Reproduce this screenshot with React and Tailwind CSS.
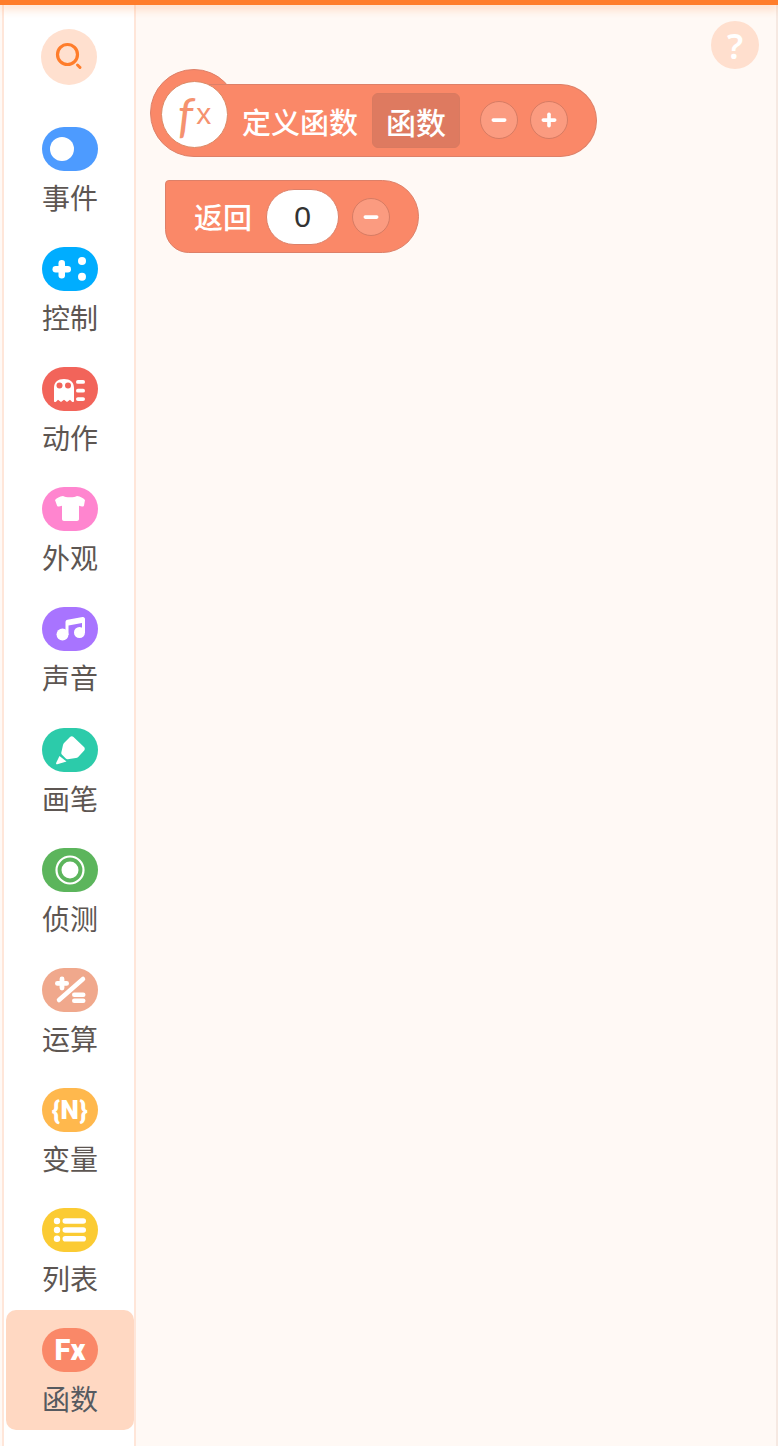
import clsx from 'clsx'

const cjk = "font-['Noto_Sans_CJK_SC','Noto_Sans',sans-serif]"

function SwitchIcon() {
  return (
    <svg width="56" height="44" viewBox="0 0 56 44">
      <circle cx="20" cy="22" r="12" fill="#fff" />
    </svg>
  )
}

function GameIcon() {
  return (
    <svg width="56" height="44" viewBox="0 0 56 44" fill="#fff">
      <rect x="10.500" y="19" width="18.500" height="6.500" rx="3.200" />
      <rect x="16.500" y="13" width="6.500" height="18.500" rx="3.200" />
      <circle cx="40" cy="14" r="4" />
      <circle cx="40" cy="29.700" r="4" />
    </svg>
  )
}

function GhostIcon() {
  return (
    <svg width="56" height="44" viewBox="0 0 56 44">
      <path
        d="M12 34V21c0-6 4-9 10-9s10 3 10 9v13c0 1.200-1.200 1.400-2 .7l-2-2-3 2.400-3-2.400-3 2.400-3-2.400-2 2c-.8.7-2 .5-2-.7z"
        fill="#fff"
      />
      <circle cx="17.500" cy="18.500" r="3" fill="#f2645a" />
      <circle cx="26" cy="18.500" r="3" fill="#f2645a" />
      <rect x="34" y="13" width="9" height="3.800" rx="1.900" fill="#fff" />
      <rect x="34" y="21.800" width="9" height="3.800" rx="1.900" fill="#fff" />
      <rect x="34" y="30.200" width="9" height="3.800" rx="1.900" fill="#fff" />
    </svg>
  )
}

function ShirtIcon() {
  return (
    <svg width="56" height="44" viewBox="0 0 56 44">
      <path
        d="M21 9c2 1.800 12 1.800 14 0 3.500.5 6 2 8 4l-1 5.500c-.3 1-1 1.200-2 1l-3-.8V32c0 1-.8 2-2 2H22c-1.200 0-2-1-2-2V18.700l-3 .8c-1 .2-1.700 0-2-1l-2-5.500c2-2 4.500-3.500 8-4z"
        fill="#fff"
      />
    </svg>
  )
}

function MusicIcon() {
  return (
    <svg width="56" height="44" viewBox="0 0 56 44" fill="#fff">
      <circle cx="20.500" cy="27.500" r="6" />
      <circle cx="37.500" cy="25.500" r="5.500" />
      <path d="M23.500 28V15c0-1.200.8-2 2-2.200L40.500 10c1.500-.3 2.500.8 2.500 2v14h-3V16l-13.500 2.500V28z" />
    </svg>
  )
}

function PenIcon() {
  return (
    <svg width="56" height="44" viewBox="0 0 56 44" fill="#fff">
      <path d="M28 9c1-1 2.500-1 3.500 0L42 19c1 1 1 2.500.2 3.500l-6 6.500c-.6.700-1.400 1-2.400 1.100l-8 1.200c-.8.100-1.500-.2-2-.7l-4-4c-.5-.5-.7-1.200-.5-2l1.700-7.500c.2-.8.5-1.400 1-2z" />
      <path d="M17.500 28l7 5.500-9.200 2.800c-.8.200-1.400-.4-1.200-1.200z" />
    </svg>
  )
}

function RadarIcon() {
  return (
    <svg width="56" height="44" viewBox="0 0 56 44" fill="none">
      <circle cx="28" cy="22" r="13.500" stroke="#fff" strokeWidth="2.200" />
      <circle cx="28" cy="22" r="8.500" fill="#fff" />
    </svg>
  )
}

function MathIcon() {
  return (
    <svg width="56" height="44" viewBox="0 0 56 44" fill="#fff">
      <rect x="13" y="13" width="14" height="4.800" rx="2.400" />
      <rect x="17.600" y="8.500" width="4.800" height="14" rx="2.400" />
      <path d="M17 32L41 11" stroke="#fff" strokeWidth="4.500" strokeLinecap="round" />
      <rect x="30" y="24.500" width="13.500" height="4.500" rx="2.200" />
      <rect x="30" y="30.500" width="13.500" height="4.500" rx="2.200" />
    </svg>
  )
}

function ListIcon() {
  return (
    <svg width="56" height="44" viewBox="0 0 56 44" fill="#fff">
      <circle cx="15" cy="13" r="3.200" />
      <circle cx="15" cy="22" r="3.200" />
      <circle cx="15" cy="30.700" r="3.200" />
      <rect x="20.500" y="10.200" width="23.500" height="5.600" rx="2.800" />
      <rect x="20.500" y="19.200" width="23.500" height="5.600" rx="2.800" />
      <rect x="20.500" y="27.900" width="23.500" height="5.600" rx="2.800" />
    </svg>
  )
}

function TextIcon({ children, className }) {
  return <span className={clsx("font-['Roboto',sans-serif] leading-none text-white", className)}>{children}</span>
}

const categories = [
  { label: '事件', color: 'bg-[#4d9bff]', icon: <SwitchIcon /> },
  { label: '控制', color: 'bg-[#00adff]', icon: <GameIcon /> },
  { label: '动作', color: 'bg-[#f2645a]', icon: <GhostIcon /> },
  { label: '外观', color: 'bg-[#ff85cf]', icon: <ShirtIcon /> },
  { label: '声音', color: 'bg-[#a874ff]', icon: <MusicIcon /> },
  { label: '画笔', color: 'bg-[#2ccbaa]', icon: <PenIcon /> },
  { label: '侦测', color: 'bg-[#5cb55c]', icon: <RadarIcon /> },
  { label: '运算', color: 'bg-[#f0a88c]', icon: <MathIcon /> },
  {
    label: '变量',
    color: 'bg-[#ffb84d]',
    icon: <TextIcon className="text-[26px] font-black tracking-[0.5px]">{'{N}'}</TextIcon>,
  },
  { label: '列表', color: 'bg-[#fbcb33]', icon: <ListIcon /> },
  {
    label: '函数',
    color: 'bg-[#fa8868]',
    icon: <TextIcon className="text-[29px] font-black">Fx</TextIcon>,
    active: true,
  },
]

function Category({ label, color, icon, active }) {
  return (
    <div
      className={clsx(
        'flex h-[120.11px] flex-col items-center rounded-[10px] pt-[18px]',
        active && 'bg-[#ffd8c2]'
      )}
    >
      <div className={clsx('flex h-11 w-14 items-center justify-center rounded-[22px]', color)}>{icon}</div>
      <div className={clsx('mt-[4px] text-[28px] leading-[44px]', active ? 'text-[#565a60]' : 'text-[#5d5652]')}>
        {label}
      </div>
    </div>
  )
}

function RoundButton({ plus }) {
  return (
    <div className="flex size-[38px] items-center justify-center rounded-full border border-[#d67c64] bg-[#fb9b80]">
      <svg width="18" height="18" viewBox="0 0 18 18" fill="#fff">
        <rect x="1.500" y="7.300" width="15" height="3.600" rx="1.800" />
        {plus && <rect x="7.200" y="1.500" width="3.600" height="15" rx="1.800" />}
      </svg>
    </div>
  )
}

export default function App() {
  return (
    <div className={clsx('relative flex h-[1446px] w-[778px] overflow-hidden bg-[#fff9f5]', cjk)}>
      <div className="absolute inset-x-0 top-0 z-10 h-[5px] bg-[#ff7d2b] shadow-[0_3px_10px_rgba(255,125,43,0.4)]" />

      <aside className="ml-[2px] h-full w-[134px] border-x-2 border-[#ffe6d9] bg-white pt-[10px] pl-[2px]">
        <div className="flex h-[99px] items-start justify-center pt-[19px] pr-[2px]">
          <div className="flex size-14 items-center justify-center rounded-full bg-[#ffe0cf]">
            <svg width="30" height="30" viewBox="0 0 30 30" fill="none" stroke="#ff7d2b">
              <circle cx="13.500" cy="12.500" r="10" strokeWidth="3.200" />
              <path d="M23.500 23l2.500 2.500" strokeWidth="3" strokeLinecap="round" />
            </svg>
          </div>
        </div>
        {categories.map((c) => (
          <Category key={c.label} {...c} />
        ))}
      </aside>

      <main className="relative flex-1 border-r-2 border-[#f6e9e2] pt-[84px] pl-[14px]">
        <div className="absolute top-[21px] right-[17px] flex size-12 items-center justify-center rounded-full bg-[#ffdfce] font-['Noto_Sans',sans-serif] text-[35px] leading-none font-semibold text-white">
          ?
        </div>

        <div className="relative h-[73px] w-[447px]">
          <div className="absolute -top-[15px] left-0 size-[88px] rounded-full border border-[#dd8068] bg-[#fa8868]" />
          <div className="absolute inset-y-0 right-0 left-[44px] flex items-center rounded-r-[37px] border border-l-0 border-[#dd8068] bg-[#fa8868] pl-[48px]">
            <span className="mt-[2px] text-[29px] leading-none font-medium text-white">定义函数</span>
            <div className="ml-[14px] flex h-[55px] w-[88px] items-center justify-center rounded-md border border-[#d97a60] bg-[#de7a60]">
              <span className="text-[30px] leading-none font-medium text-white">函数</span>
            </div>
            <div className="mt-[-1px] ml-5 flex gap-3">
              <RoundButton />
              <RoundButton plus />
            </div>
          </div>
          <div className="absolute -top-[3px] left-[11px] flex size-[67px] items-center justify-center rounded-full border border-[#dc8a66] bg-white text-[#f5926f]">
            <span className="font-['Lato',sans-serif] text-[48px] leading-none italic">f</span>
            <span className="-mt-[1px] ml-[3px] font-['Liberation_Sans',sans-serif] text-[30px] leading-none">x</span>
          </div>
        </div>

        <div className="mt-[23px] ml-[15px] flex h-[73px] w-[254px] items-center rounded-tl-[4px] rounded-tr-[37px] rounded-br-[37px] rounded-bl-[24px] border border-[#dd8068] bg-[#fa8868] pl-[28px]">
          <span className="text-[29px] leading-none font-medium text-white">返回</span>
          <div className="ml-[14px] flex h-[56px] w-[73px] items-center justify-center rounded-full border border-[#dd8068] bg-white font-['Liberation_Sans',sans-serif] text-[30px] text-[#333]">
            0
          </div>
          <div className="ml-[13px]">
            <RoundButton />
          </div>
        </div>
      </main>
    </div>
  )
}
